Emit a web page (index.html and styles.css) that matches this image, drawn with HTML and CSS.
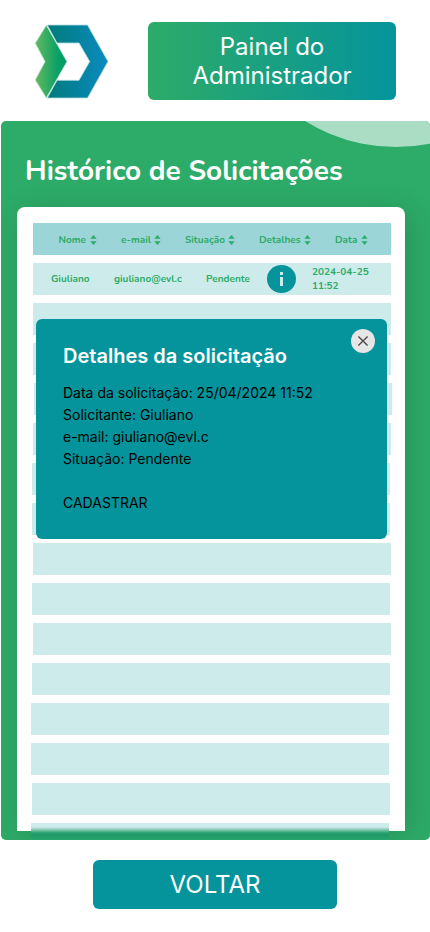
FILE: index.html
```html
<!DOCTYPE html>
<html lang="pt-BR">
<head>
<meta charset="utf-8">
<meta name="viewport" content="width=device-width, initial-scale=1">
<title>Painel do Administrador</title>
<link rel="stylesheet" href="styles.css">
</head>
<body>
<svg class="defs" width="0" height="0" aria-hidden="true">
  <symbol id="sort" viewBox="0 0 7 10"><path d="M3.5 0 6.7 3.8H.3ZM3.5 10 .3 6.2h6.4Z" fill="#2dab68"/></symbol>
</svg>
<header class="top">
  <svg class="logo" viewBox="0 0 75 75" aria-label="Logo">
    <defs>
      <linearGradient id="lg"><stop offset="0" stop-color="#65b960"/><stop offset=".7" stop-color="#0aa166"/><stop offset="1" stop-color="#009b67"/></linearGradient>
      <linearGradient id="lb"><stop offset="0" stop-color="#007b7b"/><stop offset="1" stop-color="#0b8bc0"/></linearGradient>
    </defs>
    <path d="M13.3 1H53.5L74 37.5 53.5 74H13.3L23 56.3H45L55.7 37.5 45 19H23Z" fill="url(#lb)" stroke="#b5dcdd" stroke-width=".8"/>
    <path d="M12.3 1.2 33 37.6 12.3 74 1.2 56 11 37.6 1.2 19.2Z" fill="url(#lg)" stroke="#c5e6d6" stroke-width=".9"/>
  </svg>
  <h1 class="panel-title">Painel do Administrador</h1>
</header>
<main class="panel">
  <div class="bubble"></div>
  <h2 class="heading">Histórico de Solicitações</h2>
  <section class="card">
    <div class="row head">
      <span class="nome">Nome<svg class="sort"><use href="#sort"/></svg></span>
      <span class="email">e-mail<svg class="sort"><use href="#sort"/></svg></span>
      <span class="situacao">Situação<svg class="sort"><use href="#sort"/></svg></span>
      <span class="detalhes">Detalhes<svg class="sort"><use href="#sort"/></svg></span>
      <span class="data">Data<svg class="sort"><use href="#sort"/></svg></span>
    </div>
    <div class="row entry">
      <span class="v-nome">Giuliano</span>
      <span class="v-email">giuliano@evl.c</span>
      <span>Pendente</span>
      <svg class="info" viewBox="0 0 29 28"><ellipse cx="14.5" cy="14" rx="14.5" ry="14" fill="#05949c"/><path d="M13 7h3v3h-3zM13 12h3v9h-3z" fill="#cdebea"/></svg>
      <span class="v-data">2024-04-25 11:52</span>
    </div>
    <div class="row"></div>
    <div class="row"></div>
    <div class="row out"></div>
    <div class="row"></div>
    <div class="row in1"></div>
    <div class="row in1"></div>
    <div class="row"></div>
    <div class="row in1"></div>
    <div class="row"></div>
    <div class="row in1"></div>
    <div class="row in2"></div>
    <div class="row in2"></div>
    <div class="row in1"></div>
    <div class="row in2 last"></div>
  </section>
  <aside class="dialog">
    <svg class="close" viewBox="0 0 24 24"><circle cx="12" cy="12" r="12" fill="#e6e6e6"/><path d="m7.4 7.4 9.2 9.2m0-9.2-9.2 9.2" stroke="#4b4b4b" stroke-width="1.4"/></svg>
    <h3 class="dialog-title">Detalhes da solicitação</h3>
    <p>Data da solicitação: 25/04/2024 11:52</p>
    <p>Solicitante: Giuliano</p>
    <p>e-mail: giuliano@evl.c</p>
    <p>Situação: Pendente</p>
    <p class="action">CADASTRAR</p>
  </aside>
</main>
<button class="back">VOLTAR</button>
</body>
</html>
```

FILE: styles.css
```css
* { box-sizing: border-box; }
body { margin: 0; height: 932px; overflow: hidden; background: #fff; font-family: Inter, sans-serif; }
h1, h2, h3, p { margin: 0; }
.defs { display: block; height: 0; }
.top { display: flex; height: 121px; padding: 22px 34px 0; justify-content: space-between; align-items: flex-start; }
.logo { width: 75px; height: 75px; margin-top: 2px; }
.panel-title { width: 248px; height: 78px; padding: 10px 30px; border-radius: 6px; background: linear-gradient(90deg, #2dab68, #05949c); color: #fff; font-size: 24px; line-height: 29px; font-weight: 400; text-align: center; }
.panel { position: relative; height: 719px; margin-left: 1px; padding-left: 16px; border-radius: 5px; background: #2dab68; overflow: hidden; }
.bubble { position: absolute; left: 223px; top: -318px; width: 344px; height: 344px; border-radius: 50%; background: #abddc4; }
.heading { position: relative; height: 86px; padding: 30px 0 0 8px; color: #fff; font: 700 28px/40px Nunito, "Open Sans", sans-serif; white-space: nowrap; }
.card { display: flex; flex-direction: column; gap: 8px; width: 388px; height: 624px; padding: 16px 0 0 16px; border-radius: 8px 8px 0 0; background: #fff; box-shadow: 4px 4px 30px rgba(0, 0, 0, .15); }
.row { display: flex; align-items: center; flex: none; width: 358px; height: 32px; background: #cdebea; color: #2dab68; font: 700 10px/14px Nunito, "Open Sans", sans-serif; white-space: nowrap; }
.head { padding: 2px 0 0 25.5px; background: #9bd5d7; }
.head span { display: flex; align-items: center; justify-content: space-between; }
.nome { width: 38.5px; margin-right: 24px; }
.email { width: 40px; margin-right: 24px; }
.situacao { width: 50px; margin-right: 24px; }
.detalhes { width: 52px; margin-right: 24px; }
.data { width: 33px; }
.sort { width: 7px; height: 10px; }
.entry { padding-left: 18px; }
.v-nome { width: 63px; }
.v-email { width: 92px; }
.info { width: 29px; height: 28px; margin-left: auto; margin-right: 16px; }
.v-data { width: 79px; white-space: normal; padding-right: 18px; }
.out { margin-left: 1px; }
.in1 { margin-left: -1px; }
.in2 { margin-left: -2px; }
.last { height: 17px; background: linear-gradient(#cdebea 4px, #b9dfd9 5px, #24a06b 10px, #1f9a68 12px, #27a56b 17px); }
.dialog { position: absolute; left: 35px; top: 198px; width: 351px; height: 220px; padding: 24px 27px; border-radius: 6px; background: #05949c; color: #000; font-size: 14px; line-height: 22px; }
.dialog-title { margin-bottom: 13px; color: #fff; font-size: 20px; line-height: 26px; font-weight: 600; }
.action { margin-top: 22px; }
.close { position: absolute; right: 12px; top: 10px; width: 24px; height: 24px; }
.back { display: block; width: 244px; height: 49px; margin: 20px 0 0 93px; padding: 0; border: 0; border-radius: 6px; background: #05949c; color: #fff; font: 400 24px/29px Inter, sans-serif; }
```
